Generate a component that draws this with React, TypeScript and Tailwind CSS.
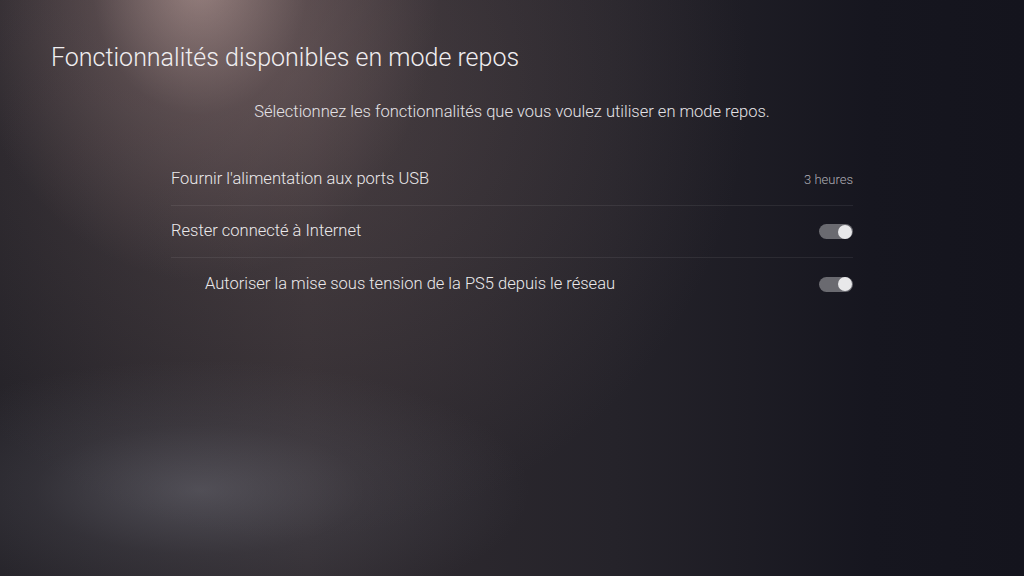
import React from 'react';

const Toggle = () => (
  <div className="relative h-[15px] w-[34px] rounded-full bg-[#6a6a70]">
    <div className="absolute right-[1px] top-[0.5px] h-[14px] w-[14px] rounded-full bg-[#e8e8ea]" />
  </div>
);

const Row = ({ label, indent, right, last }: { label: string; indent?: boolean; right: React.ReactNode; last?: boolean }) => (
  <div className={`flex h-[52px] items-center justify-between ${last ? '' : 'border-b border-white/[0.07]'}`}>
    <span className={`text-[16.5px] font-light text-[#ebe9eb] ${indent ? 'pl-[34px]' : ''}`}>{label}</span>
    {right}
  </div>
);

export default function App() {
  return (
    <div
      className="relative h-[576px] w-[1024px] overflow-hidden bg-[#17161f]"
      style={{ fontFamily: 'Roboto, "Open Sans", sans-serif' }}
    >
      {/* background light */}
      <div className="pointer-events-none absolute inset-0 bg-[linear-gradient(90deg,#242228_0%,#312c31_30%,#25232a_60%,#16161f_85%,#14141d_100%)]" />
      <div className="pointer-events-none absolute inset-0 bg-[radial-gradient(ellipse_240px_300px_at_200px_-20px,rgba(200,170,165,0.75),rgba(140,115,115,0.35)_45%,transparent_100%)]" />
      <div className="pointer-events-none absolute inset-0 bg-[radial-gradient(ellipse_460px_460px_at_290px_80px,rgba(120,100,100,0.35),transparent_100%)]" />
      <div className="pointer-events-none absolute inset-0 bg-[radial-gradient(ellipse_330px_130px_at_200px_490px,rgba(115,115,125,0.5),rgba(100,100,110,0.2)_50%,transparent_100%)]" />

      <div className="relative flex flex-col">
        <h1 className="pl-[51px] pt-[42px] text-[25px] font-light leading-[32px] text-[#f0eef0]">
          Fonctionnalités disponibles en mode repos
        </h1>
        <p className="mt-[27px] text-center text-[16.5px] font-light leading-[22px] text-[#e4e2e6]">
          Sélectionnez les fonctionnalités que vous voulez utiliser en mode repos.
        </p>
        <div className="ml-[171px] mt-[31px] w-[682px] flex flex-col">
          <Row
            label="Fournir l'alimentation aux ports USB"
            right={<span className="text-[13px] font-light text-[#b0afb6]">3 heures</span>}
          />
          <Row label="Rester connecté à Internet" right={<Toggle />} />
          <Row label="Autoriser la mise sous tension de la PS5 depuis le réseau" indent right={<Toggle />} last />
        </div>
      </div>
    </div>
  );
}
